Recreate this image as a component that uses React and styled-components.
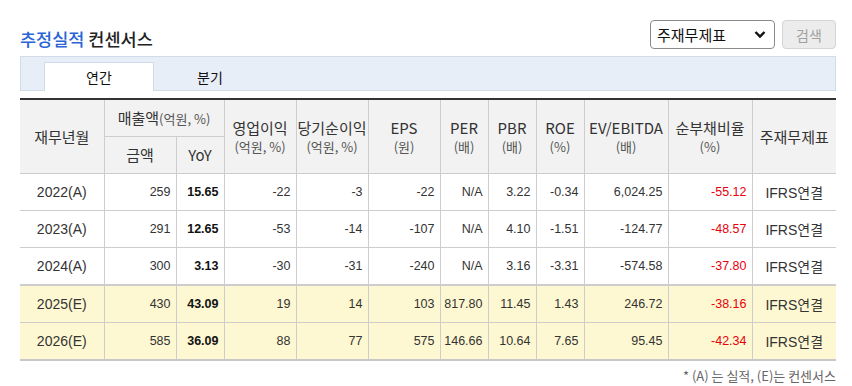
import styled, { createGlobalStyle } from "styled-components";

const GlobalStyle = createGlobalStyle`
    body {
        margin: 0;
        background: #fff;
        font-family: "Noto Sans CJK KR", "Liberation Sans", sans-serif;
        color: #333;
    }
`;

const Page = styled.div`
    padding: 20px 16px 0 20px;
`;

const Header = styled.div`
    display: flex;
    align-items: center;
    justify-content: space-between;
    height: 29px;
`;

const Title = styled.h2`
    margin: 8px 0 0;
    font-size: 17.5px;
    font-weight: 500;
    color: #222;
`;

const Blue = styled.span`
    color: #2a64d6;
`;

const Controls = styled.div`
    display: flex;
    gap: 7px;
`;

const SelectBox = styled.div`
    position: relative;
    width: 125px;
    height: 29px;
`;

const Select = styled.select`
    appearance: none;
    width: 100%;
    height: 100%;
    border: 1px solid #8a8a8a;
    border-radius: 4px;
    background: #fff;
    padding: 0 0 0 6px;
    font-family: inherit;
    font-size: 15px;
    color: #111;
`;

const Chevron = styled.svg`
    position: absolute;
    right: 9px;
    top: 10px;
    pointer-events: none;
`;

const Button = styled.button`
    width: 54px;
    height: 29px;
    border: 1px solid #d4d4d4;
    border-radius: 4px;
    background: #ececec;
    color: #a0a0a0;
    font-family: inherit;
    font-size: 14px;
`;

const TabBar = styled.div`
    display: flex;
    align-items: flex-end;
    height: 33px;
    margin-top: 7px;
    padding-left: 23px;
    background: #e8eef8;
    border: 1px solid #d2dbe8;
`;

const Tab = styled.div`
    width: ${(p) => (p.$active ? "108px" : "110px")};
    height: 28px;
    margin-bottom: -1px;
    display: flex;
    align-items: center;
    justify-content: center;
    font-size: 14px;
    color: #111;
    background: ${(p) => (p.$active ? "#fff" : "transparent")};
    border: 1px solid ${(p) => (p.$active ? "#d2dbe8" : "transparent")};
    border-bottom: none;
`;

const Table = styled.table`
    width: 816px;
    margin-top: 7px;
    border-collapse: collapse;
    table-layout: fixed;
    border-top: 2px solid #333;
    border-bottom: 2px solid #c8c8c8;
`;

const Th = styled.th`
    height: 36px;
    padding: 0;
    background: #f2f2f2;
    border: 1px solid #cdcdcd;
    border-top: none;
    font-size: 15px;
    font-weight: 400;
    color: #333;
    line-height: 18px;
    white-space: nowrap;
    &:first-child {
        border-left: none;
    }
    &:last-child {
        border-right: none;
    }
`;

const Unit = styled.span`
    display: block;
    margin-top: 1px;
    font-size: 13px;
    line-height: 17px;
    color: #555;
`;

const InlineUnit = styled.span`
    font-size: 13px;
    color: #555;
`;

const Tr = styled.tr`
    background: ${(p) => (p.$est ? "#fdf8d2" : "#fff")};
    border-top: ${(p) => (p.$first ? "2px" : "1px")} solid #cdcdcd;
`;

const Td = styled.td`
    height: 36px;
    padding: 0 5px 0 0;
    border-left: 1px solid #cdcdcd;
    text-align: right;
    font-family: "Liberation Sans", "DejaVu Sans", sans-serif;
    font-size: 12.5px;
    font-weight: ${(p) => (p.$bold ? 700 : 400)};
    color: ${(p) => (p.$red ? "#e8000b" : p.$bold ? "#111" : "#333")};
    &:first-child {
        border-left: none;
    }
`;

const Label = styled.td`
    height: 36px;
    padding: 0;
    border-left: 1px solid #cdcdcd;
    text-align: center;
    font-family: "Liberation Sans", "Noto Sans CJK KR", sans-serif;
    font-size: 14px;
    color: #333;
    &:first-child {
        border-left: none;
    }
`;

const Note = styled.div`
    margin-top: 5px;
    text-align: right;
    font-size: 13px;
    color: #666;
`;

const widths = [84, 72, 48, 72, 72, 72, 48, 48, 48, 84, 84, 84];

const rows = [
    { y: "2022(A)", v: ["259", "15.65", "-22", "-3", "-22", "N/A", "3.22", "-0.34", "6,024.25", "-55.12"] },
    { y: "2023(A)", v: ["291", "12.65", "-53", "-14", "-107", "N/A", "4.10", "-1.51", "-124.77", "-48.57"] },
    { y: "2024(A)", v: ["300", "3.13", "-30", "-31", "-240", "N/A", "3.16", "-3.31", "-574.58", "-37.80"] },
    { y: "2025(E)", est: true, v: ["430", "43.09", "19", "14", "103", "817.80", "11.45", "1.43", "246.72", "-38.16"] },
    { y: "2026(E)", est: true, v: ["585", "36.09", "88", "77", "575", "146.66", "10.64", "7.65", "95.45", "-42.34"] },
];

const App = () => {
    return (
        <Page>
            <GlobalStyle />
            <Header>
                <Title>
                    <Blue>추정실적</Blue> 컨센서스
                </Title>
                <Controls>
                    <SelectBox>
                        <Select defaultValue="주재무제표">
                            <option>주재무제표</option>
                            <option>IFRS연결</option>
                            <option>IFRS별도</option>
                        </Select>
                        <Chevron width="12" height="9" viewBox="0 0 12 9">
                            <path d="M1.5 2 L6 6.5 L10.5 2" fill="none" stroke="#111" strokeWidth="2.4" />
                        </Chevron>
                    </SelectBox>
                    <Button>검색</Button>
                </Controls>
            </Header>
            <TabBar>
                <Tab $active>연간</Tab>
                <Tab>분기</Tab>
            </TabBar>
            <Table>
                <colgroup>
                    {widths.map((w, i) => (
                        <col key={i} style={{ width: w }} />
                    ))}
                </colgroup>
                <thead>
                    <tr>
                        <Th rowSpan={2}>재무년월</Th>
                        <Th colSpan={2}>
                            매출액<InlineUnit>(억원, %)</InlineUnit>
                        </Th>
                        <Th rowSpan={2}>
                            영업이익<Unit>(억원, %)</Unit>
                        </Th>
                        <Th rowSpan={2}>
                            당기순이익<Unit>(억원, %)</Unit>
                        </Th>
                        <Th rowSpan={2}>
                            EPS<Unit>(원)</Unit>
                        </Th>
                        <Th rowSpan={2}>
                            PER<Unit>(배)</Unit>
                        </Th>
                        <Th rowSpan={2}>
                            PBR<Unit>(배)</Unit>
                        </Th>
                        <Th rowSpan={2}>
                            ROE<Unit>(%)</Unit>
                        </Th>
                        <Th rowSpan={2}>
                            EV/EBITDA<Unit>(배)</Unit>
                        </Th>
                        <Th rowSpan={2}>
                            순부채비율<Unit>(%)</Unit>
                        </Th>
                        <Th rowSpan={2}>주재무제표</Th>
                    </tr>
                    <tr>
                        <Th>금액</Th>
                        <Th>YoY</Th>
                    </tr>
                </thead>
                <tbody>
                    {rows.map((r, i) => (
                        <Tr key={r.y} $est={r.est} $first={i === 3}>
                            <Label>{r.y}</Label>
                            {r.v.map((val, j) => (
                                <Td key={j} $bold={j === 1} $red={j === 9}>
                                    {val}
                                </Td>
                            ))}
                            <Label>IFRS연결</Label>
                        </Tr>
                    ))}
                </tbody>
            </Table>
            <Note>* (A) 는 실적, (E)는 컨센서스</Note>
        </Page>
    );
};

export default App;
